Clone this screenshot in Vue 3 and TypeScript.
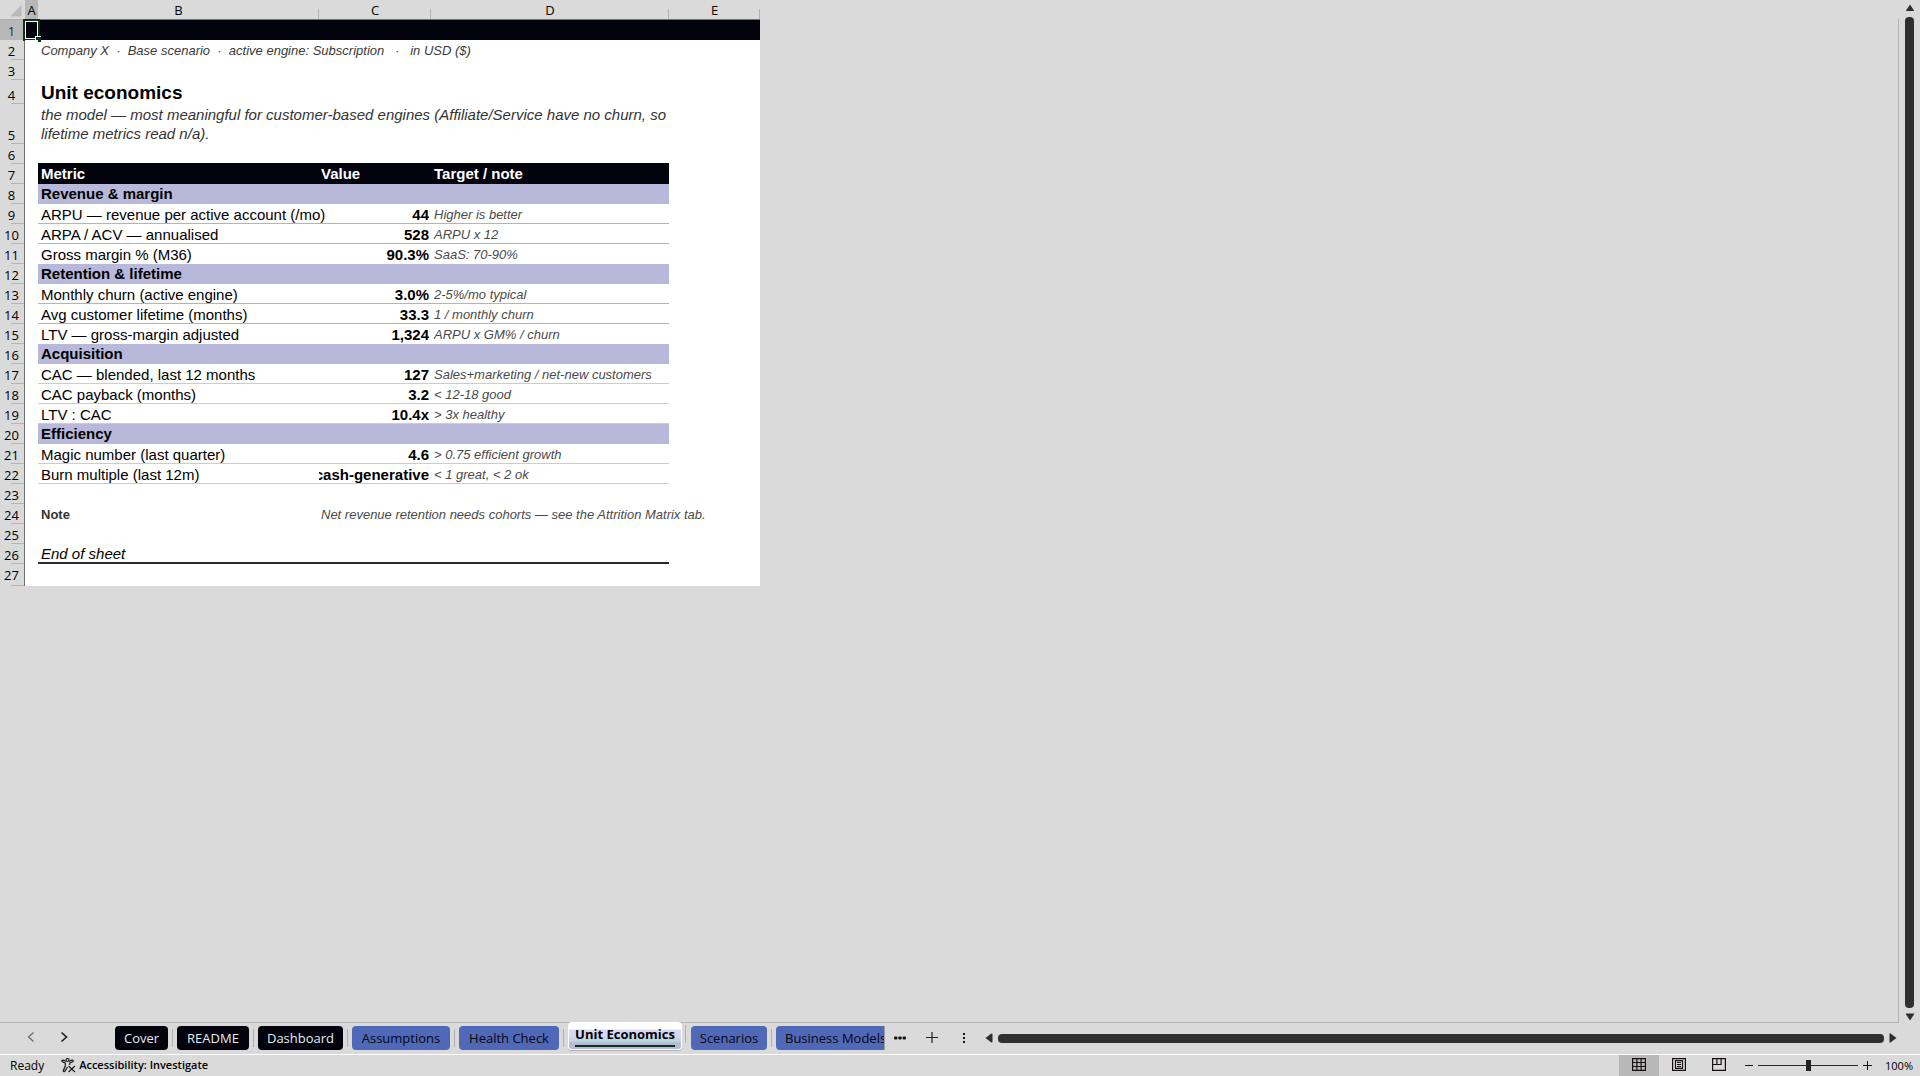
<script setup lang="ts">
import { ref } from 'vue'

type Kind = 'blank' | 'banner' | 'meta' | 'title' | 'intro' | 'head' | 'section' | 'metric' | 'note' | 'end'

interface Row {
  kind: Kind
  label?: string
  value?: string
  note?: string
  rule?: 'dark' | 'light' | 'none'
}

interface Tab {
  name: string
  tone: 'ink' | 'blue' | 'active' | 'cut'
  width: number
}

const rows: Row[] = [
  { kind: 'banner' },
  { kind: 'meta', label: 'Company X  ·  Base scenario  ·  active engine: Subscription   ·   in USD ($)' },
  { kind: 'blank' },
  { kind: 'title', label: 'Unit economics' },
  {
    kind: 'intro',
    label: 'the model — most meaningful for customer-based engines (Affiliate/Service have no churn, so lifetime metrics read n/a).',
  },
  { kind: 'blank' },
  { kind: 'head', label: 'Metric', value: 'Value', note: 'Target / note' },
  { kind: 'section', label: 'Revenue & margin' },
  { kind: 'metric', label: 'ARPU — revenue per active account (/mo)', value: '44', note: 'Higher is better', rule: 'dark' },
  { kind: 'metric', label: 'ARPA / ACV — annualised', value: '528', note: 'ARPU x 12', rule: 'dark' },
  { kind: 'metric', label: 'Gross margin % (M36)', value: '90.3%', note: 'SaaS: 70-90%', rule: 'none' },
  { kind: 'section', label: 'Retention & lifetime' },
  { kind: 'metric', label: 'Monthly churn (active engine)', value: '3.0%', note: '2-5%/mo typical', rule: 'dark' },
  { kind: 'metric', label: 'Avg customer lifetime (months)', value: '33.3', note: '1 / monthly churn', rule: 'dark' },
  { kind: 'metric', label: 'LTV — gross-margin adjusted', value: '1,324', note: 'ARPU x GM% / churn', rule: 'none' },
  { kind: 'section', label: 'Acquisition' },
  { kind: 'metric', label: 'CAC — blended, last 12 months', value: '127', note: 'Sales+marketing / net-new customers', rule: 'light' },
  { kind: 'metric', label: 'CAC payback (months)', value: '3.2', note: '< 12-18 good', rule: 'light' },
  { kind: 'metric', label: 'LTV : CAC', value: '10.4x', note: '> 3x healthy', rule: 'light' },
  { kind: 'section', label: 'Efficiency' },
  { kind: 'metric', label: 'Magic number (last quarter)', value: '4.6', note: '> 0.75 efficient growth', rule: 'light' },
  { kind: 'metric', label: 'Burn multiple (last 12m)', value: 'cash-generative', note: '< 1 great, < 2 ok', rule: 'light' },
  { kind: 'blank' },
  { kind: 'note', label: 'Note', value: 'Net revenue retention needs cohorts — see the Attrition Matrix tab.' },
  { kind: 'blank' },
  { kind: 'end', label: 'End of sheet' },
  { kind: 'blank' },
]

const tabs: Tab[] = [
  { name: 'Cover', tone: 'ink', width: 53 },
  { name: 'README', tone: 'ink', width: 72 },
  { name: 'Dashboard', tone: 'ink', width: 85 },
  { name: 'Assumptions', tone: 'blue', width: 98 },
  { name: 'Health Check', tone: 'blue', width: 100 },
  { name: 'Unit Economics', tone: 'active', width: 114 },
  { name: 'Scenarios', tone: 'blue', width: 76 },
  { name: 'Business Models', tone: 'cut', width: 109 },
]

const zoom = ref(50)

const isWide = (kind: Kind): boolean => kind === 'meta' || kind === 'title' || kind === 'intro'
</script>

<template>
  <div class="app">
    <main class="workspace">
      <div class="canvas">
        <table class="sheet">
          <colgroup>
            <col class="c-num" /><col class="c-a" /><col class="c-b" /><col class="c-c" /><col class="c-d" /><col class="c-e" />
          </colgroup>
          <thead>
            <tr>
              <th class="corner" aria-label="Select all">
                <svg width="12" height="12" viewBox="0 0 12 12"><path d="M11.500 0V11.500H0z" fill="#b9b9b9" /></svg>
              </th>
              <th scope="col" class="picked">A</th>
              <th scope="col" class="tick">B</th>
              <th scope="col" class="tick">C</th>
              <th scope="col" class="tick">D</th>
              <th scope="col" class="tick">E</th>
            </tr>
          </thead>
          <tbody>
            <tr v-for="(row, i) in rows" :key="i" :class="[row.kind, row.rule ? 'rule-' + row.rule : '']">
              <th scope="row" :class="{ picked: i === 0 }">{{ i + 1 }}</th>
              <td class="a"><div v-if="i === 0" class="cursor"></div></td>
              <template v-if="isWide(row.kind)">
                <td colspan="4" class="b">{{ row.label }}</td>
              </template>
              <template v-else-if="row.kind === 'note'">
                <td class="b">{{ row.label }}</td>
                <td colspan="3" class="c">{{ row.value }}</td>
              </template>
              <template v-else>
                <td class="b fill">{{ row.label }}</td>
                <td class="c fill"><div class="clip"><span>{{ row.value }}</span></div></td>
                <td class="d fill">{{ row.note }}</td>
                <td class="e"></td>
              </template>
            </tr>
          </tbody>
        </table>
      </div>
      <div class="vscroll">
        <button type="button" aria-label="Scroll up">
          <svg width="10" height="8" viewBox="0 0 10 8"><path d="M5 0.500L9 6.500Q9 7 8.500 7H1.500Q1 7 1 6.500z" fill="#2f2f2f" /></svg>
        </button>
        <div class="vthumb"></div>
        <button type="button" aria-label="Scroll down">
          <svg width="10" height="8" viewBox="0 0 10 8"><path d="M5 7.500L1 1.500Q0.500 0.500 1.500 0.500H8.500Q9.500 0.500 9 1.500z" fill="#2f2f2f" /></svg>
        </button>
      </div>
    </main>

    <nav class="tabbar" aria-label="Sheets">
      <div class="arrows">
        <button type="button" aria-label="Previous sheet">
          <svg width="8" height="12" viewBox="0 0 8 12"><path d="M6.500 1.500L1.500 6l5 4.500" fill="none" stroke="#6e6e6e" stroke-width="1.300" /></svg>
        </button>
        <button type="button" aria-label="Next sheet">
          <svg width="8" height="12" viewBox="0 0 8 12"><path d="M1.500 1.500L6.500 6l-5 4.500" fill="none" stroke="#1c1c1c" stroke-width="1.600" /></svg>
        </button>
      </div>
      <div class="tabs">
        <button v-for="tab in tabs" :key="tab.name" type="button" class="tab" :class="tab.tone" :style="{ width: tab.width + 'px' }">
          <span>{{ tab.name }}</span>
        </button>
      </div>
      <div class="tools">
        <button type="button" aria-label="More sheets">
          <svg width="12" height="4" viewBox="0 0 12 4"><g fill="#151515"><rect width="3.400" height="3" y="0.500" rx="1" /><rect x="4.300" y="0.500" width="3.400" height="3" rx="1" /><rect x="8.600" y="0.500" width="3.400" height="3" rx="1" /></g></svg>
        </button>
        <button type="button" aria-label="New sheet">
          <svg width="12" height="12" viewBox="0 0 12 12"><path d="M0 5.500H12M6 0V11" stroke="#2b2020" stroke-width="1.200" /></svg>
        </button>
        <button type="button" aria-label="Resize tab bar">
          <svg width="4" height="12" viewBox="0 0 4 12"><g fill="#151515"><rect x="1" y="1" width="2" height="2" /><rect x="1" y="5" width="2" height="2" /><rect x="1" y="9" width="2" height="2" /></g></svg>
        </button>
      </div>
      <div class="hscroll">
        <button type="button" aria-label="Scroll left">
          <svg width="8" height="10" viewBox="0 0 8 10"><path d="M0.500 5L6 0.800Q7.500 0 7.500 1.500V8.500Q7.500 10 6 9.200z" fill="#2f2f2f" /></svg>
        </button>
        <div class="hthumb"></div>
        <button type="button" aria-label="Scroll right">
          <svg width="8" height="10" viewBox="0 0 8 10"><path d="M7.500 5L1.500 0.500Q0.500 0 0.500 1V9Q0.500 10 1.500 9.500z" fill="#2f2f2f" /></svg>
        </button>
      </div>
    </nav>

    <footer class="status">
      <span class="ready">Ready</span>
      <button type="button" class="access">
        <svg width="15" height="15" viewBox="0 0 15 15" fill="none" stroke="#1a1a1a" stroke-width="1.200">
          <circle cx="6.500" cy="2" r="1.500" />
          <path d="M5 3.200L2 2.200Q0.600 2 0.800 3.200Q0.900 3.800 4.300 5V8L2.300 12.500Q2.300 14 3.500 13.700L6.500 9.200M8 3.200L11 2.200Q12.400 2 12.200 3.200Q12 3.800 8.700 5V7" />
          <path d="M7.500 8l6.500 6M14 8l-6.500 6" />
        </svg>
        Accessibility: Investigate
      </button>
      <div class="views">
        <button type="button" class="on" aria-label="Normal view">
          <svg width="14" height="13" viewBox="0 0 14 13" fill="none" stroke="#151010" stroke-width="1.200"><path d="M0.600 0.600H13.400V12.400H0.600zM0.600 4.500H13.400M0.600 8.500H13.400M4.900 0.600V12.400M9.100 0.600V12.400" /></svg>
        </button>
        <button type="button" aria-label="Page layout view">
          <svg width="14" height="13" viewBox="0 0 14 13" fill="none" stroke="#151010" stroke-width="1.200"><path d="M0.600 0.600H13.400V12.400H0.600zM3.500 2.600H10.500V10.400H3.500zM5 4.500H9M5 6.500H9M5 8.500H9" /></svg>
        </button>
        <button type="button" aria-label="Page break view">
          <svg width="14" height="13" viewBox="0 0 14 13" fill="none" stroke="#151010" stroke-width="1.200"><path d="M0.600 0.600H13.400V12.400H0.600zM4.900 0.600V6.500M0.600 6.500H9.100V0.600" /></svg>
        </button>
      </div>
      <div class="zoom">
        <button type="button" aria-label="Zoom out"><svg width="8" height="9" viewBox="0 0 8 9"><path d="M0 4.500H8" stroke="#151515" /></svg></button>
        <input v-model="zoom" type="range" min="0" max="100" aria-label="Zoom" />
        <button type="button" aria-label="Zoom in"><svg width="9" height="9" viewBox="0 0 9 9"><path d="M0 4.500H9M4.500 0V9" stroke="#151515" /></svg></button>
        <span class="percent">100%</span>
      </div>
    </footer>
  </div>
</template>

<style>
body {
  background: #dadada;
}
</style>

<style scoped>
.app {
  display: flex;
  flex-direction: column;
  min-height: 100vh;
  background: #dadada;
  color: #000;
  font-family: 'Open Sans', 'Noto Sans', sans-serif;
}

button {
  display: flex;
  align-items: center;
  justify-content: center;
  padding: 0;
  border: 0;
  background: none;
  color: inherit;
  font: inherit;
}

svg {
  display: block;
  flex: none;
}

/* worksheet */
.workspace {
  display: flex;
  flex: 1;
}

.canvas {
  flex: 1;
  min-width: 0;
  border-bottom: 1px solid #b4b4b4;
  background: linear-gradient(#b4b4b4, #b4b4b4) right 0 top 19px / 1px 100% no-repeat;
}

.sheet {
  width: 760px;
  table-layout: fixed;
  border-collapse: separate;
  border-spacing: 0;
  font-family: 'Liberation Sans', Arial, sans-serif;
  font-size: 15px;
  line-height: 18px;
  white-space: pre;
}

.c-num { width: 25px; }
.c-a { width: 13px; }
.c-b { width: 281px; }
.c-c { width: 112px; }
.c-d { width: 238px; }
.c-e { width: 91px; }

th,
td {
  box-sizing: border-box;
  height: 20px;
  padding: 0;
  text-align: left;
  vertical-align: bottom;
}

th {
  font-family: 'Open Sans', 'Noto Sans', sans-serif;
  font-size: 13px;
  font-weight: 400;
  line-height: 18px;
  text-align: center;
}

thead th {
  border-bottom: 1px solid #6f756f;
}

thead .corner {
  padding: 0 0 2px 10px;
  border-bottom-color: #b0b0b0;
}

thead .tick {
  background: linear-gradient(#b4b4b4, #b4b4b4) right bottom / 1px 10px no-repeat;
}

thead .picked {
  background: #b8b8b8;
}

tbody th {
  padding-right: 1px;
  border-right: 1px solid #707070;
  background: linear-gradient(#b4b4b4, #b4b4b4) right bottom / 13px 1px no-repeat;
}

tbody th.picked {
  background: #b8b8b8;
  color: #0f3d1e;
}

td {
  background: #fff;
}

tbody tr:last-child th,
tbody tr:last-child td {
  height: 22px;
}

tbody tr:last-child th {
  padding-bottom: 2px;
}

.b,
.c,
.d {
  padding: 0 2px 0 3px;
}

.banner td {
  background: #02020c;
}

.a {
  position: relative;
}

.cursor {
  position: absolute;
  top: -1px;
  left: -2px;
  box-sizing: border-box;
  width: 17px;
  height: 22px;
  border: 2px solid #0b3317;
  box-shadow: inset 0 0 0 1px #fff;
}

.cursor::after {
  position: absolute;
  right: -3px;
  bottom: -3px;
  width: 5px;
  height: 5px;
  border-top: 1px solid #fff;
  border-left: 1px solid #fff;
  background: #0b3317;
  content: '';
}

.meta td {
  color: #3a3a3a;
  font-size: 13px;
  font-style: italic;
}

.title th,
.title td {
  height: 24px;
}

.title td {
  font-size: 19px;
  font-weight: 700;
  line-height: 22px;
}

.intro th,
.intro td {
  height: 40px;
}

.intro .b {
  padding: 0 60px 1px 3px;
  color: #333;
  font-style: italic;
  line-height: 19px;
  white-space: normal;
}

.head .fill {
  padding-bottom: 1px;
  background: #02020c;
  box-shadow: 0 -1px 0 #02020c;
  color: #fff;
  font-weight: 700;
}

.section .fill {
  padding-bottom: 1px;
  border-top: 1px solid #b8b8da;
  background: #b8b8da;
  font-weight: 700;
}

.metric .c {
  font-weight: 700;
}

.clip {
  display: flex;
  margin-left: -3px;
  overflow: hidden;
}

.head .clip {
  margin-left: -1px;
}

.metric .clip {
  justify-content: flex-end;
}

.metric .d {
  color: #4a4a4a;
  font-size: 13px;
  font-style: italic;
}

.metric .fill {
  border-bottom: 1px solid transparent;
  line-height: 17px;
}

.rule-dark .fill {
  border-bottom-color: #b4b4b4;
}

.rule-light .fill {
  border-bottom-color: #cccccc;
}

.note .b {
  color: #333;
  font-size: 13px;
  font-weight: 700;
}

.note .c {
  padding-left: 2px;
  color: #4a4a4a;
  font-size: 13px;
  font-style: italic;
}

.end .b {
  font-style: italic;
  line-height: 16px;
}

.end .fill {
  border-bottom: 2px solid #2a2a2a;
}

.vscroll {
  display: flex;
  flex-direction: column;
  align-items: center;
  gap: 5px;
  width: 21px;
  padding: 4px 0 2px;
}

.vthumb {
  flex: 1;
  width: 9px;
  border-radius: 4px;
  background: #2f2f2f;
}

/* sheet tabs */
.tabbar {
  display: flex;
  height: 31px;
  border-bottom: 1px solid #fff;
}

.arrows {
  display: flex;
  gap: 25px;
  width: 88px;
  padding: 0 0 3px 27px;
}

.tabs {
  display: flex;
  gap: 9px;
  padding-top: 3px;
}

.tab {
  position: relative;
  height: 24px;
  border-radius: 4px;
  font-size: 13px;
  line-height: 20px;
  white-space: nowrap;
}

.tab:not(:last-child)::after {
  position: absolute;
  top: 3px;
  right: -5px;
  width: 1px;
  height: 18px;
  background: #b0b0b0;
  content: '';
}

.ink {
  background: #02020c;
  color: #e8ecf4;
}

.blue,
.cut {
  background: #5068b8;
  color: #05060f;
}

.cut {
  justify-content: flex-start;
  padding-left: 9px;
  overflow: hidden;
  border-right: 1px solid #9c9c9c;
  border-radius: 4px 0 0 4px;
}

.active {
  height: 28px;
  margin-top: -4px;
  border: 1px solid #fff;
  border-top: 0;
  background: linear-gradient(#fff 0 7px, #d8d8f4 8px 14px, #b8dada 17px 19px, #b8b8da 21px);
  box-shadow: 0 1px 0 #b0b0b0;
  font-weight: 700;
}

.active span {
  border-bottom: 2px solid #0b3317;
  line-height: 21px;
}

.tools {
  display: flex;
  gap: 20px;
  padding: 0 0 2px 9px;
}

.tools button:last-child {
  margin-left: 4px;
}

.hscroll {
  display: flex;
  flex: 1;
  align-items: center;
  gap: 5px;
  padding: 0 23px 1px 19px;
}

.hthumb {
  flex: 1;
  height: 9px;
  border-radius: 4px;
  background: #2f2f2f;
}

/* status bar */
.status {
  display: flex;
  height: 21px;
  padding-left: 10px;
  font-size: 12px;
  line-height: 22px;
}

.access {
  gap: 3px;
  margin-left: 17px;
  padding-bottom: 1px;
  font-size: 11px;
  font-weight: 600;
}

.views {
  display: flex;
  margin-left: auto;
}

.views button {
  width: 40px;
  padding-bottom: 2px;
}

.views .on {
  background: #b8b8b8;
}

.zoom {
  display: flex;
  align-items: center;
  gap: 5px;
  padding: 0 7px 0 6px;
}

.zoom input {
  width: 100px;
  height: 11px;
  margin: 0;
  appearance: none;
  background: linear-gradient(#2b2b2b, #2b2b2b) center / 100% 1px no-repeat;
}

.zoom input::-webkit-slider-thumb {
  width: 5px;
  height: 11px;
  appearance: none;
  background: #222;
}

.percent {
  margin-left: 8px;
  font-size: 11px;
}
</style>
